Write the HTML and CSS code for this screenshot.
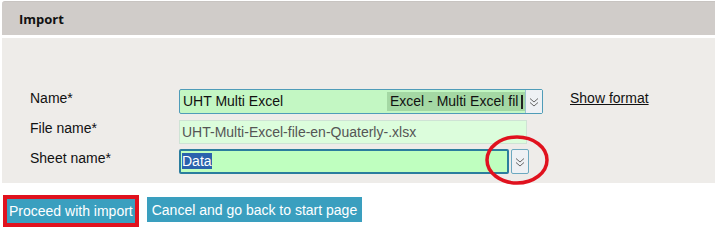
FILE: index.html
```html
<!DOCTYPE html>
<html lang="en">

<head>
    <meta charset="UTF-8">
    <title>Import</title>
    <link rel="stylesheet" href="styles.css">
</head>

<body>
    <div class="page">
        <div class="panel-head">Import</div>
        <div class="panel-body">
            <div class="form-grid">
                <label class="field-label">Name*</label>
                <div class="combo name-combo">
                    <span class="combo-text">UHT Multi Excel</span>
                    <span class="combo-sel">Excel - Multi Excel fil<span class="cut"></span></span>
                    <span class="combo-btn">
                        <svg width="10" height="12" viewBox="0 0 10 12"><path d="M1 2.5l4 3.5 4-3.5M1 6.5l4 3.5 4-3.5" fill="none" stroke="#666" stroke-width="1"/></svg>
                    </span>
                </div>
                <a class="show-format" href="#">Show format</a>

                <label class="field-label">File name*</label>
                <div class="file-input">UHT-Multi-Excel-file-en-Quaterly-.xlsx</div>
                <span></span>

                <label class="field-label">Sheet name*</label>
                <div class="sheet-row">
                    <div class="sheet-input"><span class="selected">Data</span></div>
                    <span class="sheet-btn">
                        <svg width="10" height="12" viewBox="0 0 10 12"><path d="M1 2.5l4 3.5 4-3.5M1 6.5l4 3.5 4-3.5" fill="none" stroke="#666" stroke-width="1"/></svg>
                    </span>
                    <svg class="mark" width="66" height="52" viewBox="0 0 66 52"><ellipse cx="33" cy="26" rx="30" ry="23" fill="none" stroke="#e0121e" stroke-width="3.5"/></svg>
                </div>
                <span></span>
            </div>
        </div>
        <div class="actions">
            <span class="mark-box"><button class="btn">Proceed with import</button></span>
            <button class="btn btn-cancel">Cancel and go back to start page</button>
        </div>
    </div>
</body>

</html>
```

FILE: styles.css
```css
body {
    margin: 0;
    background: #fff;
    font-family: "Liberation Sans", Arial, sans-serif;
    font-size: 14px;
    color: #111;
}

.page {
    width: 715px;
    height: 227px;
    overflow: hidden;
}

.panel-head {
    margin: 1px 0 0 2px;
    height: 34px;
    line-height: 34px;
    padding-left: 17px;
    background: #d0ccc9;
    border-top: 1px solid #c8c4c1;
    box-sizing: border-box;
    border-radius: 3px 0 0 0;
    font-family: "Open Sans", sans-serif;
    font-weight: 700;
    font-size: 13px;
    color: #111;
}

.panel-body {
    margin: 3px 0 0 2px;
    height: 145px;
    background: #eeece9;
    padding: 51px 0 0 28px;
    box-sizing: border-box;
}

.form-grid {
    display: grid;
    grid-template-columns: 149px 364px auto;
    grid-auto-rows: 25px;
    row-gap: 5px;
    align-items: center;
}

.field-label {
    align-self: start;
    padding-top: 1px;
}

.combo {
    display: flex;
    align-items: stretch;
    height: 25px;
    box-sizing: border-box;
    border: 1px solid #4f9cb8;
    border-radius: 2px;
    background: #c3f7c3;
}

.combo-text {
    flex: 1;
    padding-left: 3px;
    line-height: 23px;
}

.combo-sel {
    display: flex;
    align-items: center;
    gap: 3px;
    width: 138px;
    margin: 2px 0;
    padding-left: 3px;
    line-height: 19px;
    background: #a4d8a4;
    white-space: nowrap;
    box-sizing: border-box;
}

.cut {
    width: 2px;
    height: 14px;
    background: #222;
}

.combo-btn,
.sheet-btn {
    display: flex;
    align-items: center;
    justify-content: center;
    width: 16px;
    background: #eef1f4;
    border-left: 1px solid #9cc3d2;
}

.show-format {
    margin-left: 27px;
    color: #111;
    text-decoration: underline;
    align-self: start;
    padding-top: 1px;
}

.file-input {
    width: 348px;
    height: 24px;
    box-sizing: border-box;
    border: 1px solid #cfe3d5;
    background: #dcfddc;
    color: #555;
    padding-left: 2px;
    line-height: 22px;
}

.sheet-row {
    position: relative;
    display: flex;
    gap: 2px;
    height: 25px;
}

.sheet-input {
    width: 330px;
    box-sizing: border-box;
    border: 2px solid #2b7d9e;
    border-radius: 2px;
    background: #bfffbf;
    padding-left: 1px;
    line-height: 21px;
}

.selected {
    background: #2a62ad;
    color: #fff;
}

.sheet-btn {
    width: 18px;
    box-sizing: border-box;
    border: 1px solid #6ca9c0;
    border-radius: 2px;
}

.mark {
    position: absolute;
    left: 305px;
    top: -15px;
}

.actions {
    display: flex;
    align-items: flex-start;
    gap: 8px;
    margin-top: 12px;
    padding-left: 3px;
}

.mark-box {
    display: inline-block;
    border: 4px solid #e0121e;
    line-height: 0;
}

.btn {
    border: none;
    background: #3a9fbf;
    color: #fff;
    font-family: "Liberation Sans", Arial, sans-serif;
    font-size: 14px;
    height: 24px;
    padding: 0 2px;
    line-height: 24px;
}

.btn-cancel {
    margin-top: 2px;
    height: 25px;
    padding: 0 5px;
}
```
